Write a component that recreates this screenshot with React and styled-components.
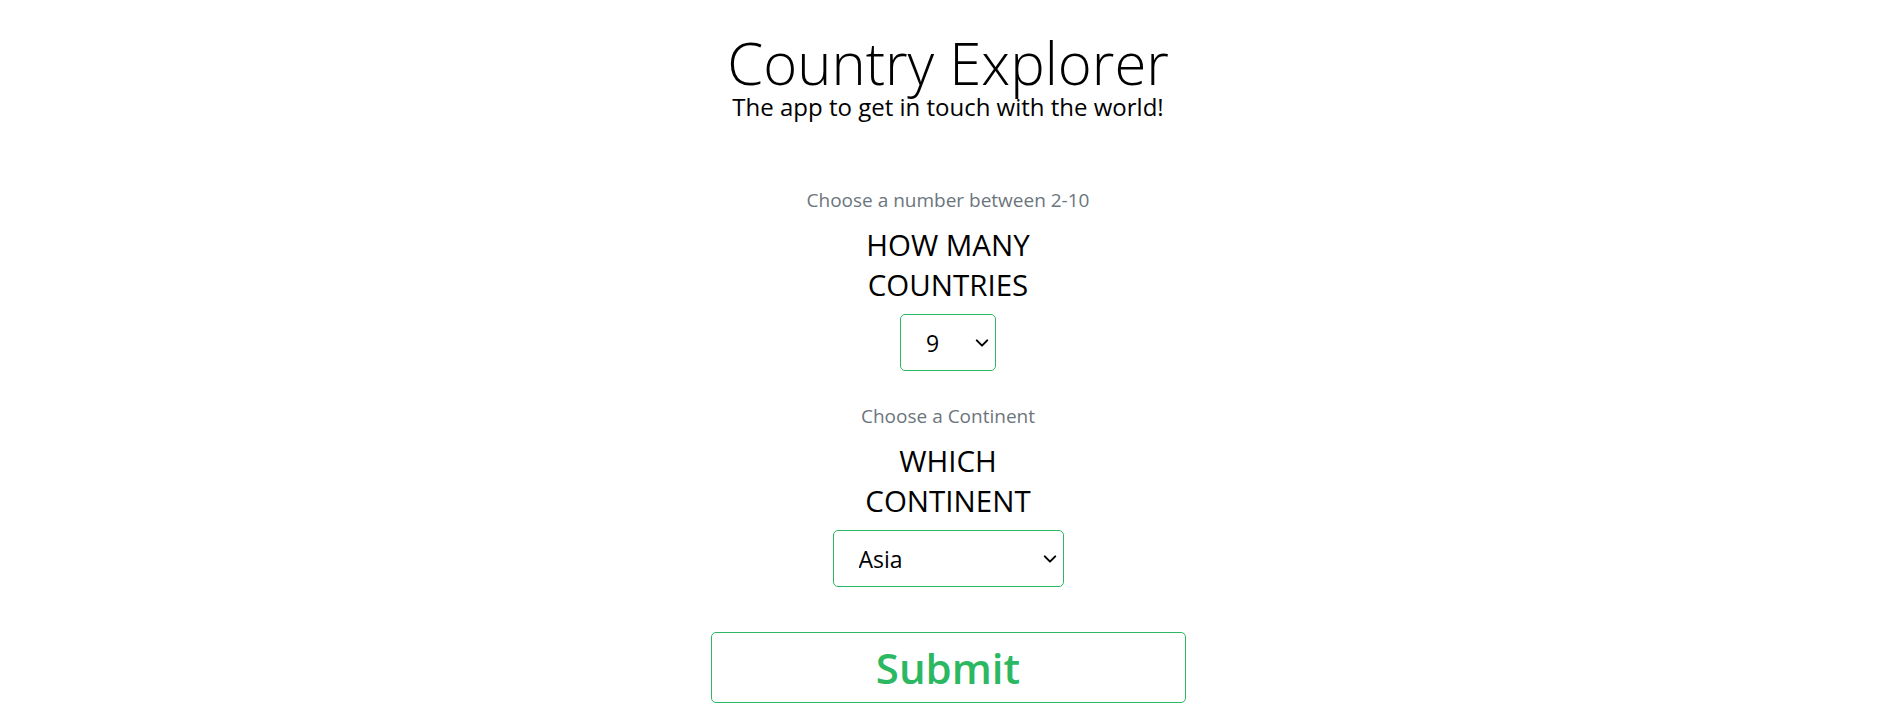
import React, { useState } from "react";
import styled, { createGlobalStyle } from "styled-components";

const Global = createGlobalStyle`
  html, body { margin: 0; padding: 0; background: #fff; }
  body { font-family: "Open Sans", "Noto Sans", sans-serif; color: #000; }
`;

const Page = styled.main`
  display: flex;
  flex-direction: column;
  align-items: center;
  padding-top: 32px;
`;

const Header = styled.header`
  display: flex;
  flex-direction: column;
  align-items: center;
  margin-bottom: 67px;
`;

const Title = styled.h1`
  margin: 0;
  font-size: 58px;
  font-weight: 350;
  line-height: 61px;
`;

const Subtitle = styled.p`
  margin: 0;
  font-size: 24px;
  line-height: 28px;
`;

const Form = styled.form`
  display: flex;
  flex-direction: column;
  align-items: center;
`;

const Field = styled.div`
  display: flex;
  flex-direction: column;
  align-items: center;
  margin-bottom: ${(p) => p.$gap}px;
`;

const Hint = styled.small`
  color: #6c757d;
  font-size: 19px;
  line-height: 24px;
  margin-bottom: 13px;
`;

const Label = styled.label`
  max-width: 230px;
  text-align: center;
  font-size: 29.5px;
  line-height: 40px;
  margin-bottom: 9px;
`;

const Select = styled.select`
  width: ${(p) => p.$w}px;
  height: 57px;
  box-sizing: border-box;
  border: 1px solid #2cb862;
  border-radius: 5px;
  background-color: #fff;
  font-family: inherit;
  font-size: 23px;
  color: #000;
  padding: 0 24px 0 ${(p) => p.$pl}px;
  appearance: none;
  background-image: url("data:image/svg+xml,%3csvg xmlns='http://www.w3.org/2000/svg' viewBox='0 0 16 16'%3e%3cpath fill='none' stroke='%23000' stroke-linecap='round' stroke-linejoin='round' stroke-width='2.3' d='M2 5l6 6 6-6'/%3e%3c/svg%3e");
  background-repeat: no-repeat;
  background-position: right 6px center;
  background-size: 14px 14px;
  outline: none;
`;

const Submit = styled.button`
  width: 475px;
  height: 71px;
  border: 1px solid #2cb862;
  border-radius: 5px;
  background: #fff;
  color: #2cb862;
  font-family: inherit;
  font-size: 42px;
  font-weight: 600;
  line-height: 1;
  padding: 0;
  cursor: pointer;
`;

export default function App() {
  const [count, setCount] = useState("9");
  const [continent, setContinent] = useState("Asia");
  const numbers = [2, 3, 4, 5, 6, 7, 8, 9, 10];
  const continents = ["Africa", "Americas", "Asia", "Europe", "Oceania"];
  return (
    <>
      <Global />
      <Page>
        <Header>
          <Title>Country Explorer</Title>
          <Subtitle>The app to get in touch with the world!</Subtitle>
        </Header>
        <Form onSubmit={(e) => e.preventDefault()}>
          <Field $gap={33}>
            <Hint>Choose a number between 2-10</Hint>
            <Label htmlFor="count">HOW MANY COUNTRIES</Label>
            <Select id="count" $w={96} $pl={25} value={count} onChange={(e) => setCount(e.target.value)}>
              {numbers.map((n) => (
                <option key={n} value={n}>{n}</option>
              ))}
            </Select>
          </Field>
          <Field $gap={45}>
            <Hint>Choose a Continent</Hint>
            <Label htmlFor="continent">WHICH CONTINENT</Label>
            <Select id="continent" $w={231} $pl={25} value={continent} onChange={(e) => setContinent(e.target.value)}>
              {continents.map((c) => (
                <option key={c} value={c}>{c}</option>
              ))}
            </Select>
          </Field>
          <Submit type="submit">Submit</Submit>
        </Form>
      </Page>
    </>
  );
}
